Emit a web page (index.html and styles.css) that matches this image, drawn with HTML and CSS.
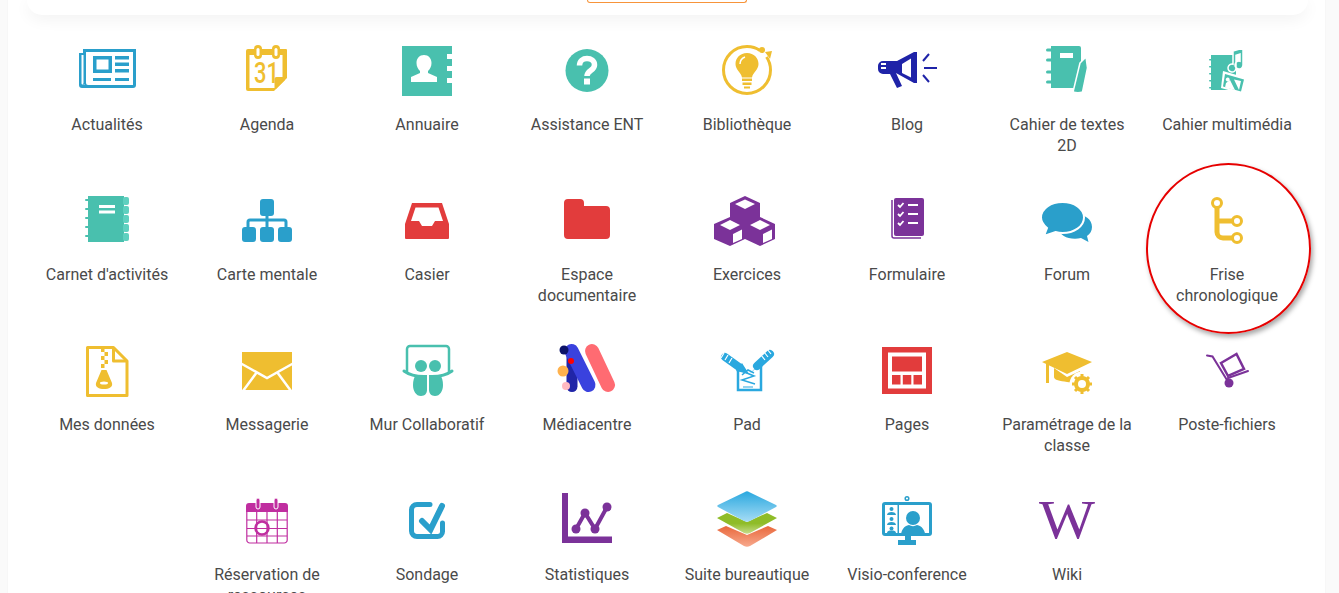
FILE: index.html
```html
<!DOCTYPE html>
<html lang="fr">
  <head>
    <meta charset="UTF-8" />
    <meta name="viewport" content="width=device-width, initial-scale=1.0" />
    <title>Mes applis</title>
    <link rel="stylesheet" href="styles.css">
  </head>
  <body>
    <div class="page">
      <div class="panel">
        <div class="top-card">
          <div class="top-button"></div>
        </div>

        <div class="apps">
          <!-- Row 1 -->
          <a class="app">
            <svg class="icon blue" viewBox="0 0 60 60"><path fill="currentColor" d="M6 9h53v36a3 3 0 0 1-3 3H5a3 3 0 0 1-3-3V13h4z"/><path fill="#fff" d="M4.500 15h2V43a1 1 0 0 0 1.500 1.500H5.500a1 1 0 0 1-1-1zM9 12h47v33H11a2 2 0 0 1-2-2z"/><path fill="currentColor" d="M16 16h19v17H16zM38 16h14v3.500H38zM38 22.500h14v3.500H38zM38 29h14v3.500H38zM16 38h18v3H16zM38 38h14v3H38z"/><path fill="#fff" d="M19.500 19.500h12v10h-12z"/></svg>
            <span class="app-name">Actualités</span>
          </a>
          <a class="app">
            <svg class="icon yellow" viewBox="0 0 60 60"><path fill="currentColor" d="M11 9h38a1 1 0 0 1 1 1v28L37 51H11a2 2 0 0 1-2-2V11a2 2 0 0 1 2-2z"/><path fill="#fff" d="M12.500 15h33v22h-6a2 2 0 0 0-2 2v9h-25z"/><rect x="17" y="5" width="8" height="14" rx="4" fill="currentColor"/><rect x="35" y="5" width="8" height="14" rx="4" fill="currentColor"/><rect x="19.500" y="8" width="3" height="8" rx="1.500" fill="#fff"/><rect x="37.500" y="8" width="3" height="8" rx="1.500" fill="#fff"/><path fill="currentColor" d="M39 49V40h9z"/><text class="cal-day" x="17" y="43" textLength="25" lengthAdjust="spacingAndGlyphs">31</text></svg>
            <span class="app-name">Agenda</span>
          </a>
          <a class="app">
            <svg class="icon teal" viewBox="0 0 60 60"><path fill="currentColor" d="M5 6h50v8h-5v5h5v7h-5v5h5v7h-5v5h5v13H5z"/><path fill="#fff" d="M27 15c4.500 0 7.500 3.500 7.500 8 0 3.500-1.500 6-3.500 8v2l9 4v5H14v-5l9-4v-2c-2-2-3.500-4.500-3.500-8 0-4.500 3-8 7.500-8z"/></svg>
            <span class="app-name">Annuaire</span>
          </a>
          <a class="app">
            <svg class="icon teal" viewBox="0 0 60 60"><circle cx="30" cy="30.500" r="21.500" fill="currentColor"/><path fill="none" stroke="#fff" stroke-width="5.500" d="M22.500 25.500c0-4.500 3.500-7 7.500-7s7.500 2.500 7.500 6.500c0 5.500-7.500 5.500-7.500 11"/><path fill="#fff" d="M27 38.500h6v6h-6z"/></svg>
            <span class="app-name">Assistance ENT</span>
          </a>
          <a class="app">
            <svg class="icon yellow" viewBox="0 0 60 60"><path fill="none" stroke="currentColor" stroke-width="3" d="M43 10.500C39.500 8 35 6.500 30 6.500 17 6.500 6.500 17 6.500 30S17 53.500 30 53.500 53.500 43 53.500 30c0-5-1.500-9.500-4-13"/><circle cx="45" cy="10" r="3" fill="currentColor"/><path fill="currentColor" d="M48 12l7-1-2 8z"/><path fill="currentColor" d="M30 13c7 0 11.500 5 11.500 11 0 6-5.500 8-6.500 13.500H25c-1-5.500-6.500-7.500-6.500-13.500 0-6 4.500-11 11.500-11z"/><path fill="none" stroke="#fff" stroke-width="1.500" d="M23 24c0-4 2.500-6 5-7"/><path fill="currentColor" d="M25 38.500h10v2.500H25zM25.500 42.500h9V45h-9zM27 46.500h6v2h-6z"/></svg>
            <span class="app-name">Bibliothèque</span>
          </a>
          <a class="app">
            <svg class="icon navy" viewBox="0 0 60 60"><path fill="currentColor" d="M37 12h3v31h-3L19 33l6 13-5 2-7-14H6a5 5 0 0 1-5-5v-3a5 5 0 0 1 5-5h14z"/><path fill="#fff" d="M4 23h5v2H4zM4 27h5v2H4zM25 24l9-5.500v19L25 33z"/><path fill="none" stroke="currentColor" stroke-width="2" d="M46 21l6-7M47 28h13M46 35l6 7"/></svg>
            <span class="app-name">Blog</span>
          </a>
          <a class="app">
            <svg class="icon teal" viewBox="0 0 60 60"><path fill="currentColor" d="M14 6h28a2 2 0 0 1 2 2v40H14z"/><path fill="#fff" d="M23 13h13v5H23z"/><path fill="currentColor" stroke="#fff" stroke-width="1.500" d="M43 23l6-6 1.500 11-5 24c-3 1-6 1-9.500 0z"/><g fill="currentColor"><rect x="9" y="8.500" width="10" height="3" rx="1.500"/><rect x="9" y="18.500" width="10" height="3" rx="1.500"/><rect x="9" y="30.500" width="10" height="3" rx="1.500"/><rect x="9" y="40.500" width="10" height="3" rx="1.500"/></g></svg>
            <span class="app-name">Cahier de textes 2D</span>
          </a>
          <a class="app">
            <svg class="icon teal" viewBox="0 0 60 60"><path fill="currentColor" d="M14 15h25v35H14z"/><g fill="currentColor"><rect x="12" y="19" width="5" height="1.500" rx="0.700"/><rect x="12" y="26" width="5" height="1.500" rx="0.700"/><rect x="12" y="33" width="5" height="1.500" rx="0.700"/><rect x="12" y="40" width="5" height="1.500" rx="0.700"/><rect x="12" y="47" width="5" height="1.500" rx="0.700"/></g><path fill="currentColor" stroke="#fff" stroke-width="1.500" d="M36 11l10-3v17a4 4 0 1 1-3-3.800V14l-4 1.200V28a4 4 0 1 1-3-3.800z"/><path fill="#fff" d="M26 31l24 7-4 16-22-6z"/><path fill="currentColor" d="M28 34l19 5.500-3 12-18-5zM31 37.500a2 2 0 1 0 1 3.500 2 2 0 0 0-1-3.500z"/><path fill="#fff" d="M29 43l4-3 5 10-10-2.500zM37 39.500l7 1.500-2 9z"/></svg>
            <span class="app-name">Cahier multimédia</span>
          </a>

          <!-- Row 2 -->
          <a class="app">
            <svg class="icon teal" viewBox="0 0 60 60"><path fill="currentColor" d="M11 6h36v46H11z"/><g fill="#5fd0bf"><rect x="46" y="7" width="6" height="8" rx="2"/><rect x="46" y="16" width="6" height="8" rx="2"/><rect x="46" y="25" width="6" height="8" rx="2"/><rect x="46" y="34" width="6" height="8" rx="2"/><rect x="46" y="43" width="6" height="8" rx="2"/></g><g fill="currentColor"><rect x="8" y="9" width="6" height="2" rx="1"/><rect x="8" y="18" width="6" height="2" rx="1"/><rect x="8" y="27" width="6" height="2" rx="1"/><rect x="8" y="36" width="6" height="2" rx="1"/><rect x="8" y="45" width="6" height="2" rx="1"/></g><path fill="#fff" d="M22 15h16v3H22zM22 20.500h16v3H22z"/></svg>
            <span class="app-name">Carnet d'activités</span>
          </a>
          <a class="app">
            <svg class="icon blue" viewBox="0 0 60 60"><rect x="23" y="9" width="14" height="17" rx="3" fill="currentColor"/><path fill="none" stroke="currentColor" stroke-width="3" d="M30 26v13M11 38v-6a2 2 0 0 1 2-2h34a2 2 0 0 1 2 2v6"/><rect x="5" y="37" width="14" height="15" rx="3" fill="currentColor"/><rect x="23" y="37" width="14" height="15" rx="3" fill="currentColor"/><rect x="41" y="37" width="14" height="15" rx="3" fill="currentColor"/></svg>
            <span class="app-name">Carte mentale</span>
          </a>
          <a class="app">
            <svg class="icon red" viewBox="0 0 60 60"><path fill="currentColor" fill-rule="evenodd" d="M15 13h30l7 21v14a1 1 0 0 1-1 1H9a1 1 0 0 1-1-1V34zM18.500 17.500L14 31h8l3 5h10l3-5h8l-4.500-13.500z"/></svg>
            <span class="app-name">Casier</span>
          </a>
          <a class="app">
            <svg class="icon red" viewBox="0 0 60 60"><path fill="currentColor" d="M11 9h12a4 4 0 0 1 4 4v3h22a4 4 0 0 1 4 4v25a4 4 0 0 1-4 4H11a4 4 0 0 1-4-4V13a4 4 0 0 1 4-4z"/></svg>
            <span class="app-name">Espace documentaire</span>
          </a>
          <a class="app">
            <svg class="icon purple" viewBox="0 0 60 60"><path fill="currentColor" d="M28 6l15 7v14l15 7v15l-15 7-15-7-15 7-16-7V34l16-7V13z"/><path fill="#fff" d="M28 9.500l10 4.500-10 5-10-5zM13 30l10 5-10 5-10-5zM43 30l10 5-10 5-10-5z"/><path fill="#fff" d="M16 44l9-4.500V49l-9 4zM46 44l9-4.500V49l-9 4z"/></svg>
            <span class="app-name">Exercices</span>
          </a>
          <a class="app">
            <svg class="icon purple" viewBox="0 0 60 60"><path fill="none" stroke="currentColor" stroke-width="1.500" d="M15 10v36a2 2 0 0 0 2 2h27"/><rect x="17" y="8" width="30" height="38" rx="2" fill="currentColor"/><path fill="none" stroke="#fff" stroke-width="1.800" d="M21 15l2 2 3.500-4M21 24l2 2 3.500-4M21 33l2 2 3.500-4M31 15h10M31 24h10M31 33h10"/></svg>
            <span class="app-name">Formulaire</span>
          </a>
          <a class="app">
            <svg class="icon blue" viewBox="0 0 60 60"><path fill="currentColor" d="M38 24c10 0 17 5.500 17 13 0 4-2 7-5 9l1.500 6-7.500-4c-2 .5-4 .7-6 .7-9 0-15-4-17-10z"/><path fill="currentColor" stroke="#fff" stroke-width="2" d="M25.500 12c11.500 0 21.500 6.500 21.500 15.500S37 43 25.500 43c-2.500 0-4.500-.3-7-1L7 46l3-8C6.500 35 4 31.500 4 27.500 4 18.500 14 12 25.500 12z"/></svg>
            <span class="app-name">Forum</span>
          </a>
          <a class="app">
            <svg class="icon yellow" viewBox="0 0 60 60"><path fill="none" stroke="currentColor" stroke-width="5" d="M20 16v26a6 6 0 0 0 6 6h10M20 31h16"/><circle cx="20" cy="13" r="4.500" fill="#fff" stroke="currentColor" stroke-width="3"/><circle cx="40" cy="31" r="4.500" fill="#fff" stroke="currentColor" stroke-width="3"/><circle cx="40" cy="48" r="4.500" fill="#fff" stroke="currentColor" stroke-width="3"/></svg>
            <span class="app-name">Frise chronologique</span>
          </a>

          <!-- Row 3 -->
          <a class="app">
            <svg class="icon yellow" viewBox="0 0 60 60"><path fill="none" stroke="currentColor" stroke-width="3" stroke-linejoin="round" d="M10.500 7.500h26L50 21v34.500H10.500z"/><path fill="none" stroke="currentColor" stroke-width="3" stroke-linejoin="round" d="M36.500 7.500V21H50"/><path fill="currentColor" d="M24 8h3.500v4H24zM27.500 12H31v4h-3.500zM24 16h3.500v4H24zM27.500 20H31v4h-3.500zM24 24h3.500v4H24zM24.500 30h5l5.500 13c1 4-3 6-8 6s-9-2-8-6z"/><ellipse cx="27" cy="43" rx="4" ry="1.500" fill="#fff"/></svg>
            <span class="app-name">Mes données</span>
          </a>
          <a class="app">
            <svg class="icon yellow" viewBox="0 0 60 60"><path fill="currentColor" d="M5 12h50v38H5z"/><path fill="none" stroke="#fff" stroke-width="2.500" d="M4 23.500L30 38l26-14.500M6 51l14-19M54 51L40 32"/></svg>
            <span class="app-name">Messagerie</span>
          </a>
          <a class="app">
            <svg class="icon teal" viewBox="0 0 60 60"><path fill="none" stroke="currentColor" stroke-width="2.500" d="M10 32V9a3 3 0 0 1 3-3h36a3 3 0 0 1 3 3v23"/><path fill="none" stroke="currentColor" stroke-width="3" stroke-linecap="round" d="M7 31c6 4.500 12 5.500 20 5.500M55 31c-6 4.500-12 5.500-20 5.500"/><circle cx="24" cy="26" r="6" fill="currentColor"/><circle cx="38" cy="26" r="6" fill="currentColor"/><path fill="currentColor" d="M19 35h11v15c0 3-2 6-6 6-5 0-8-5-8-11 0-4 1-8 3-10zM32 35h11c2 2 3 6 3 10 0 6-3 11-8 11-4 0-6-3-6-6z"/></svg>
            <span class="app-name">Mur Collaboratif</span>
          </a>
          <a class="app">
            <svg class="icon" viewBox="0 0 60 60"><path fill="none" stroke="#ff6b72" stroke-width="14" stroke-linecap="round" d="M35 11l16 34"/><path fill="none" stroke="#2025a8" stroke-width="11" stroke-linecap="round" d="M15 12v34.500"/><path fill="none" stroke="#3a42de" stroke-width="14" stroke-linecap="round" d="M14.500 11l17 34"/><circle cx="7" cy="10" r="4.500" fill="#0c1269"/><circle cx="14" cy="21" r="3" fill="#f00"/><circle cx="6" cy="31" r="5.500" fill="#ffb24d"/><circle cx="9" cy="46" r="4" fill="#ffb9c0"/></svg>
            <span class="app-name">Médiacentre</span>
          </a>
          <a class="app">
            <svg class="icon sky" viewBox="0 0 60 60"><path fill="none" stroke="currentColor" stroke-width="2.500" d="M21 26v24h23V26"/><path fill="none" stroke="currentColor" stroke-width="8" stroke-linecap="round" d="M8 17l14 10M53 14L40 26"/><path fill="currentColor" d="M19 31l6-8 7 11zM37 30l7-7-12 11z"/><path fill="none" stroke="#fff" stroke-width="1.200" d="M7 13l-3 5M11 15l-3 5M15 18l-3 5M50 9l4 5M47 12l4 5M44 15l4 5"/><path fill="none" stroke="currentColor" stroke-width="1.500" d="M25 31l12 5-12 4 13 4M25 35l6-5 6 3"/><path fill="none" stroke="currentColor" d="M26 47h10"/></svg>
            <span class="app-name">Pad</span>
          </a>
          <a class="app">
            <svg class="icon red" viewBox="0 0 60 60"><path fill="currentColor" d="M5 7h50v47H5z"/><path fill="#fff" d="M11 12.500h38v36H11z"/><path fill="currentColor" d="M15 16.500h30v15H15zM15 35h8.500v9.500H15zM25.800 35h8.500v9.500h-8.500zM36.500 35H45v9.500h-8.500z"/></svg>
            <span class="app-name">Pages</span>
          </a>
          <a class="app">
            <svg class="icon yellow" viewBox="0 0 60 60"><path fill="currentColor" d="M30 12l25 10-25 12L5 22z"/><path fill="currentColor" d="M9 24h3v19H9z"/><path fill="currentColor" d="M17 28l13 9 13-6v11c-4 1-8 1-13 0-7-1-13-2-13-5z"/><circle cx="45" cy="44" r="12.500" fill="#fff"/><circle cx="45" cy="44" r="8" fill="currentColor"/><circle cx="45" cy="44" r="4" fill="#fff"/><path fill="none" stroke="currentColor" stroke-width="3" d="M45 34v4M45 50v4M35 44h4M51 44h4M38 37l3 3M49 48l3 3M38 51l3-3M49 40l3-3"/></svg>
            <span class="app-name">Paramétrage de la classe</span>
          </a>
          <a class="app">
            <svg class="icon purple" viewBox="0 0 60 60"><path fill="none" stroke="currentColor" stroke-width="2" stroke-linecap="round" d="M10 15.500l5.500 1 16 26M31 38l20-7"/><path fill="none" stroke="currentColor" stroke-width="2.500" d="M24 23l15.500-9 7.500 15-16 7z"/><circle cx="32" cy="43" r="4.500" fill="currentColor"/></svg>
            <span class="app-name">Poste-fichiers</span>
          </a>

          <!-- Row 4 -->
          <a class="app">
            <svg class="icon magenta" viewBox="0 0 60 60"><path fill="currentColor" d="M12 13h36a3 3 0 0 1 3 3v6H9v-6a3 3 0 0 1 3-3z"/><path fill="none" stroke="currentColor" stroke-width="1.200" d="M9.800 22v28a3 3 0 0 0 3 3h34.400a3 3 0 0 0 3-3V22M9.800 30h40.400M9.800 38.500h40.400M9.800 46h40.400M19.700 22v31M30 22v31M40.300 22v31"/><rect x="19" y="8" width="4" height="11" rx="2" fill="currentColor" stroke="#fff"/><rect x="37" y="8" width="4" height="11" rx="2" fill="currentColor" stroke="#fff"/><circle cx="25" cy="38" r="6.500" fill="none" stroke="currentColor" stroke-width="2.500"/></svg>
            <span class="app-name">Réservation de ressources</span>
          </a>
          <a class="app">
            <svg class="icon blue" viewBox="0 0 60 60"><path fill="none" stroke="currentColor" stroke-width="5" stroke-linecap="round" d="M33 14.500H20a5.500 5.500 0 0 0-5.500 5.500v21a5.500 5.500 0 0 0 5.500 5.500h20.500a5 5 0 0 0 5-5V33"/><path fill="none" stroke="currentColor" stroke-width="6" stroke-linecap="round" d="M25 31l8.500 8.500L45 16"/></svg>
            <span class="app-name">Sondage</span>
          </a>
          <a class="app">
            <svg class="icon purple" viewBox="0 0 60 60"><path fill="currentColor" d="M5 3h6v43.500h44V53H5z"/><path fill="none" stroke="currentColor" stroke-width="4" d="M19 39l9-16 10 16 12-22"/><circle cx="19" cy="39" r="4.500" fill="currentColor"/><circle cx="28" cy="23" r="4.500" fill="currentColor"/><circle cx="38" cy="39" r="4.500" fill="currentColor"/><circle cx="50" cy="17" r="4.500" fill="currentColor"/></svg>
            <span class="app-name">Statistiques</span>
          </a>
          <a class="app">
            <svg class="icon" viewBox="0 0 60 60"><defs><linearGradient id="ga" x1="0" y1="0" x2="0" y2="1"><stop offset="0" stop-color="#e9683c"/><stop offset="1" stop-color="#f7a98d"/></linearGradient><linearGradient id="gb" x1="0" y1="0" x2="0" y2="1"><stop offset="0.500" stop-color="#8fbc28"/><stop offset="1" stop-color="#c6dc8c"/></linearGradient><linearGradient id="gc" x1="0" y1="0" x2="0" y2="1"><stop offset="0" stop-color="#2aa8df"/><stop offset="1" stop-color="#a6dcf5"/></linearGradient></defs><path fill="url(#ga)" d="M0 40l9-4 21 9 21-9 9 4-27 16c-2 1-4 1-6 0z"/><path fill="url(#gb)" d="M0 28l10-5 20 9 20-9 10 5-27 15c-2 1-4 1-6 0z"/><path fill="url(#gc)" d="M28 2c1-1 3-1 4 0l27 13c1 1 1 1 0 2L33 31c-2 1-4 1-6 0L1 17c-1-1-1-1 0-2z"/></svg>
            <span class="app-name">Suite bureautique</span>
          </a>
          <a class="app">
            <svg class="icon blue" viewBox="0 0 60 60"><circle cx="30" cy="8.500" r="1.800" fill="none" stroke="currentColor" stroke-width="1.500"/><path fill="currentColor" d="M8 12h44a3 3 0 0 1 3 3v28a3 3 0 0 1-3 3H8a3 3 0 0 1-3-3V15a3 3 0 0 1 3-3z"/><path fill="#fff" d="M8 15h12.500v28H8zM22 15h30v28H22z"/><circle cx="36" cy="28" r="7" fill="currentColor"/><path fill="currentColor" d="M24 46c0-6 3-10 8-11 2.500 1.500 5.500 1.500 8 0 5 1 8 5 8.500 11zM21 50h18v5H21zM28 45h6v6h-6z"/><g fill="currentColor"><circle cx="14.500" cy="19" r="2"/><path d="M10 25c0-2 2-3 4.500-3s4.500 1 4.500 3z"/><circle cx="14.500" cy="29" r="2"/><path d="M10 35c0-2 2-3 4.500-3s4.500 1 4.500 3z"/><circle cx="14.500" cy="38.500" r="2"/><path d="M10 43c0-2 2-2.500 4.500-2.500s4.500 .5 4.500 2.500z"/></g></svg>
            <span class="app-name">Visio-conference</span>
          </a>
          <a class="app">
            <svg class="icon purple" viewBox="0 0 60 60"><text class="wiki" x="2" y="48" textLength="56" lengthAdjust="spacingAndGlyphs">W</text></svg>
            <span class="app-name">Wiki</span>
          </a>
        </div>

        <!-- Hand-drawn highlight around one app -->
        <div class="highlight"></div>
      </div>
    </div>
  </body>
</html>
```

FILE: styles.css
```css
/* Basic reset for body */
body,
html {
  margin: 0;
  padding: 0;
  height: 100%;
  overflow: hidden;
  font-family: Roboto, "Liberation Sans", sans-serif;
  background-color: #fafafa;
}

.page {
  padding: 0 14px 0 8px;
  height: 100%;
  box-sizing: border-box;
}

.panel {
  position: relative;
  background-color: #fff;
  height: 100%;
  padding: 0 0 0 19px;
  box-shadow: 0 0 1px rgba(0, 0, 0, 0.08);
}

/* Bottom edge of the card that scrolled off */
.top-card {
  width: 1281px;
  height: 15px;
  background-color: #fff;
  border-radius: 0 0 16px 16px;
  box-shadow: 0 4px 16px rgba(0, 0, 0, 0.06);
  display: flex;
  justify-content: center;
}

.top-button {
  width: 158px;
  height: 2px;
  margin-right: 2px;
  border: 1px solid #f7943a;
  border-top: none;
  border-radius: 0 0 6px 6px;
}

/* App grid */
.apps {
  display: flex;
  flex-wrap: wrap;
  justify-content: center;
  width: 1280px;
  padding-top: 25px;
}

.app {
  width: 160px;
  height: 150px;
  display: flex;
  flex-direction: column;
  align-items: center;
  color: #4a4a4a;
  text-align: center;
}

.icon {
  width: 60px;
  height: 60px;
  flex: none;
  overflow: visible;
}

.app-name {
  margin-top: 14px;
  padding: 0 12px;
  font-size: 16px;
  line-height: 21px;
}

.blue { color: #2a9fcb; }
.yellow { color: #efbe30; }
.teal { color: #49c0ae; }
.red { color: #e23c3c; }
.purple { color: #7b3299; }
.navy { color: #1f23a8; }
.sky { color: #2aa8df; }
.magenta { color: #c02ea0; }

.cal-day {
  font-family: Roboto, sans-serif;
  font-size: 29px;
  font-weight: 500;
  fill: #efbe30;
}

.wiki {
  font-family: "Liberation Serif", serif;
  font-size: 54px;
  fill: #7b3299;
}

.highlight {
  position: absolute;
  left: 1138px;
  top: 163px;
  width: 161px;
  height: 167px;
  border: 2px solid #e60000;
  border-radius: 50%;
  box-shadow: 2px 3px 5px rgba(0, 0, 0, 0.35);
}
```
